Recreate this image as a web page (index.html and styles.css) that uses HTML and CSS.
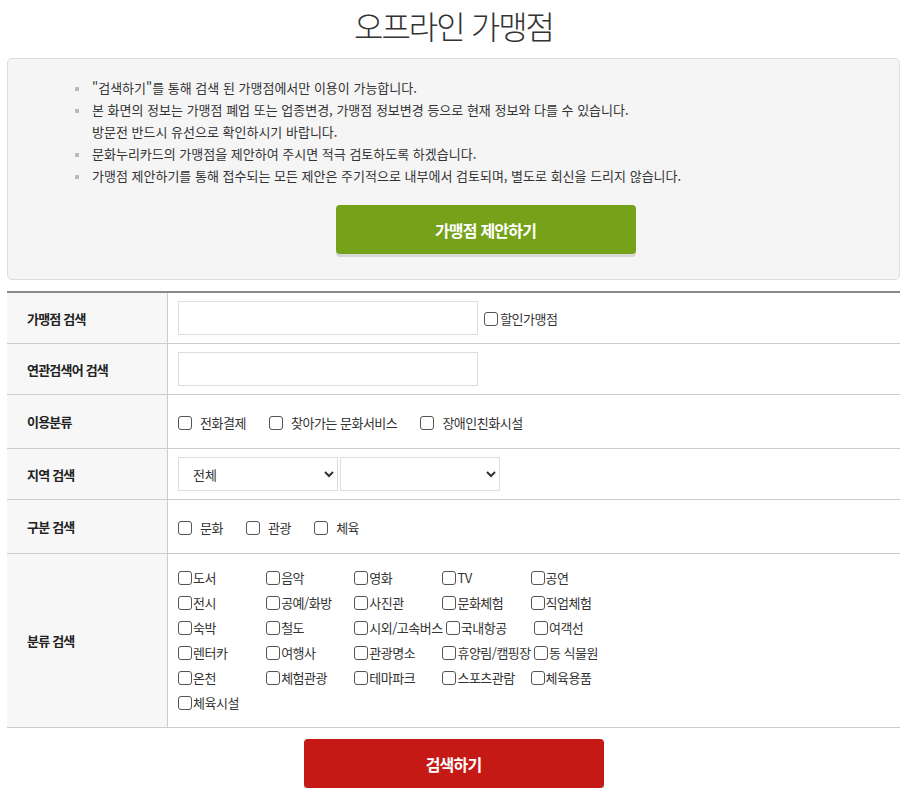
FILE: index.html
```html
<!DOCTYPE html>
<html lang="ko">
<head>
<meta charset="UTF-8">
<meta name="viewport" content="width=device-width, initial-scale=1.0">
<title>오프라인 가맹점</title>
<link rel="stylesheet" href="styles.css">
</head>
<body>
<div class="wrap">
  <h1 class="page-title">오프라인 가맹점</h1>

  <div class="info-box">
    <ul class="info-list">
      <li>"검색하기"를 통해 검색 된 가맹점에서만 이용이 가능합니다.</li>
      <li>본 화면의 정보는 가맹점 폐업 또는 업종변경, 가맹점 정보변경 등으로 현재 정보와 다를 수 있습니다.<br>방문전 반드시 유선으로 확인하시기 바랍니다.</li>
      <li>문화누리카드의 가맹점을 제안하여 주시면 적극 검토하도록 하겠습니다.</li>
      <li>가맹점 제안하기를 통해 접수되는 모든 제안은 주기적으로 내부에서 검토되며, 별도로 회신을 드리지 않습니다.</li>
    </ul>
    <div class="btn-area propose">
      <button type="button" class="btn btn-green">가맹점 제안하기</button>
    </div>
  </div>

  <table class="search-table">
    <tr class="row-1">
      <th>가맹점 검색</th>
      <td>
        <input type="text" class="txt">
        <label class="chk chk-tight"><input type="checkbox">할인가맹점</label>
      </td>
    </tr>
    <tr class="row-1">
      <th>연관검색어 검색</th>
      <td><input type="text" class="txt"></td>
    </tr>
    <tr class="row-3">
      <th>이용분류</th>
      <td>
        <label class="chk"><input type="checkbox">전화결제</label>
        <label class="chk"><input type="checkbox">찾아가는 문화서비스</label>
        <label class="chk"><input type="checkbox">장애인친화시설</label>
      </td>
    </tr>
    <tr class="row-1">
      <th>지역 검색</th>
      <td>
        <select class="sel"><option>전체</option></select>
        <select class="sel"><option></option></select>
      </td>
    </tr>
    <tr class="row-3">
      <th>구분 검색</th>
      <td>
        <label class="chk"><input type="checkbox">문화</label>
        <label class="chk"><input type="checkbox">관광</label>
        <label class="chk"><input type="checkbox">체육</label>
      </td>
    </tr>
    <tr>
      <th>분류 검색</th>
      <td class="cate-cell">
        <div class="cate-list">
          <label class="cate"><input type="checkbox">도서</label>
          <label class="cate"><input type="checkbox">음악</label>
          <label class="cate"><input type="checkbox">영화</label>
          <label class="cate"><input type="checkbox">TV</label>
          <label class="cate"><input type="checkbox">공연</label>
          <label class="cate"><input type="checkbox">전시</label>
          <label class="cate"><input type="checkbox">공예/화방</label>
          <label class="cate"><input type="checkbox">사진관</label>
          <label class="cate"><input type="checkbox">문화체험</label>
          <label class="cate"><input type="checkbox">직업체험</label>
          <label class="cate"><input type="checkbox">숙박</label>
          <label class="cate"><input type="checkbox">철도</label>
          <label class="cate"><input type="checkbox">시외/고속버스</label>
          <label class="cate"><input type="checkbox">국내항공</label>
          <label class="cate"><input type="checkbox">여객선</label>
          <label class="cate"><input type="checkbox">렌터카</label>
          <label class="cate"><input type="checkbox">여행사</label>
          <label class="cate"><input type="checkbox">관광명소</label>
          <label class="cate"><input type="checkbox">휴양림/캠핑장</label>
          <label class="cate"><input type="checkbox">동 식물원</label>
          <label class="cate"><input type="checkbox">온천</label>
          <label class="cate"><input type="checkbox">체험관광</label>
          <label class="cate"><input type="checkbox">테마파크</label>
          <label class="cate"><input type="checkbox">스포츠관람</label>
          <label class="cate"><input type="checkbox">체육용품</label>
          <label class="cate"><input type="checkbox">체육시설</label>
        </div>
      </td>
    </tr>
  </table>

  <div class="btn-area bottom">
    <button type="button" class="btn btn-red">검색하기</button>
  </div>
</div>
</body>
</html>
```

FILE: styles.css
```css
body {
  margin: 0;
  padding: 0;
  font-family: "Noto Sans CJK KR", "Noto Sans", sans-serif;
  color: #333;
  background: #fff;
}
.wrap {
  width: 893px;
  margin: 0 7px;
}
.page-title {
  margin: 0;
  padding-top: 2px;
  height: 56px;
  text-align: center;
  font-size: 32px;
  font-weight: 300;
  letter-spacing: -2px;
  line-height: 46px;
  color: #333;
}
.info-box {
  background-color: #f5f5f5;
  border: 1px solid #ddd;
  border-radius: 5px;
  padding: 18px 0 25px;
}
.info-list {
  list-style: none;
  margin: 0 0 18px;
  padding: 0 0 0 84px;
}
.info-list li {
  position: relative;
  font-size: 13px;
  line-height: 22px;
  color: #333;
}
.info-list li::before {
  content: "";
  position: absolute;
  left: -17px;
  top: 10px;
  width: 4px;
  height: 4px;
  background-color: #bbb;
}
.btn-area {
  text-align: center;
}
.btn-area.propose {
  padding-left: 64px;
}
.btn {
  width: 300px;
  height: 49px;
  border: none;
  border-radius: 4px;
  color: #fff;
  font-family: inherit;
  font-size: 16px;
  font-weight: bold;
  letter-spacing: -0.8px;
  cursor: pointer;
  box-shadow: 0 3px 0 #d6d6d6;
}
.btn-green {
  background-color: #76a21a;
}
.btn-red {
  background-color: #c41914;
}
.search-table {
  width: 100%;
  margin-top: 11px;
  border-collapse: collapse;
  border-top: 2px solid #8a8a8a;
}
.search-table th,
.search-table td {
  border-bottom: 1px solid #ccc;
  font-size: 13px;
}
.search-table th {
  width: 140px;
  padding: 0 0 0 20px;
  text-align: left;
  background-color: #f7f7f7;
  border-right: 1px solid #ccc;
  font-weight: bold;
  letter-spacing: -0.8px;
  color: #222;
}
.search-table td {
  padding: 0 10px;
  color: #333;
  letter-spacing: -0.5px;
}
.row-1 th, .row-1 td {
  height: 50px;
}
.row-3 th, .row-3 td {
  height: 53px;
}
.txt {
  width: 300px;
  height: 34px;
  box-sizing: border-box;
  border: 1px solid #ddd;
  vertical-align: middle;
  margin: 0;
}
.sel {
  width: 160px;
  height: 34px;
  box-sizing: border-box;
  border: 1px solid #ddd;
  background-color: #fff;
  padding: 0 6px 0 10px;
  font-family: inherit;
  font-size: 13px;
  color: #333;
  vertical-align: middle;
  margin: 0 -1px 0 0;
}
input[type="checkbox"] {
  appearance: none;
  -webkit-appearance: none;
  width: 14px;
  height: 14px;
  margin: 0;
  border: 1px solid #555;
  border-radius: 3px;
  background: #fff;
  vertical-align: -2px;
}
.chk {
  display: inline-block;
  margin-right: 20px;
  vertical-align: middle;
}
.chk input {
  margin-right: 8px;
}
.chk-tight {
  margin-left: 3px;
}
.chk-tight input {
  margin-right: 2px;
}
.search-table .cate-cell {
  padding: 11px 10px 12px;
}
.cate-list {
  width: 480px;
  line-height: 25px;
}
.cate {
  display: inline-block;
  min-width: 85px;
}
.cate input {
  margin-right: 1px;
}
.btn-area.bottom {
  padding-top: 11px;
}
```
